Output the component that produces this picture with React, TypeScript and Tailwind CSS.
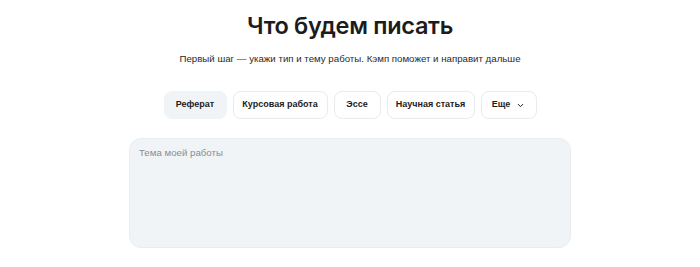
import { ChevronDown } from 'lucide-react';

const types = [
  { label: 'Реферат', w: 'w-[63px]' },
  { label: 'Курсовая работа', w: 'w-[95px]' },
  { label: 'Эссе', w: 'w-[47px]' },
  { label: 'Научная статья', w: 'w-[88px]' },
];

export default function App() {
  return (
    <div
      className="w-[700px] h-[267px] bg-white flex flex-col items-center text-[#1c1c1c]"
      style={{ fontFamily: '"Liberation Sans", Arial, sans-serif' }}
    >
      <h1
        className="mt-[9px] text-[23.5px] leading-[34px] font-semibold tracking-[-0.3px]"
        style={{ fontFamily: 'Inter, "Noto Sans", sans-serif' }}
      >
        Что будем писать
      </h1>
      <p className="mt-[9px] text-[9.7px] leading-[14px] text-[#2a2a2a]">
        Первый шаг — укажи тип и тему работы. Кэмп поможет и направит дальше
      </p>
      <div className="mt-[25px] flex gap-[6px]">
        {types.map((t, i) => (
          <button
            key={t.label}
            className={
              'h-[28px] rounded-[8px] text-[9px] font-bold text-center ' + t.w + ' ' +
              (i === 0 ? 'bg-[#f1f4f7] border border-[#f1f4f7]' : 'bg-white border border-[#e8ebef]')
            }
          >
            {t.label}
          </button>
        ))}
        <button className="w-[56px] h-[28px] rounded-[8px] text-[9px] font-bold bg-white border border-[#e8ebef] flex items-center justify-center gap-[6px]">
          Еще
          <ChevronDown size={9} strokeWidth={2.6} />
        </button>
      </div>
      <div className="mt-[19px] w-[442px] h-[110px] rounded-[12px] bg-[#f1f4f7] border border-[#e9edf1] px-[9px] py-[7px]">
        <div className="text-[9.7px] leading-[14px] text-[#8a8d91]">Тема моей работы</div>
      </div>
    </div>
  );
}
